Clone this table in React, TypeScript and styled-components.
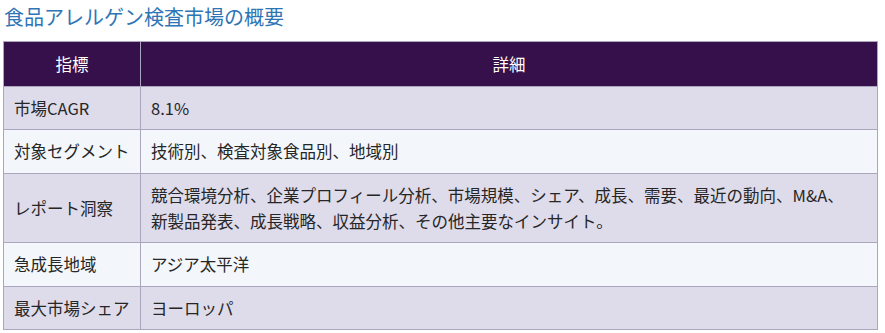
import React from "react";
import styled, { createGlobalStyle } from "styled-components";

const Global = createGlobalStyle`
  html, body { margin: 0; padding: 0; background: #ffffff; }
  body { font-family: "Noto Sans CJK JP", "Noto Sans", sans-serif; }
`;

const Page = styled.div`
  padding: 0 7px 0 3px;
`;

const Title = styled.h2`
  margin: 0;
  padding: 3px 0 0 1px;
  height: 41px;
  box-sizing: border-box;
  font-size: 20px;
  line-height: 28px;
  font-weight: 400;
  color: #2e75b6;
`;

const Table = styled.table`
  width: 100%;
  border-collapse: collapse;
  font-size: 16.5px;
  color: #262626;
  border: 1px solid #aaa6bd;
`;

const HeadCell = styled.th<{ $w?: string }>`
  background: #35104a;
  color: #ffffff;
  font-weight: 400;
  text-align: center;
  padding: 9px 10px;
  line-height: 26px;
  border: 1px solid #aaa6bd;
  width: ${(p) => p.$w ?? "auto"};
`;

const Row = styled.tr<{ $alt: boolean }>`
  background: ${(p) => (p.$alt ? "#f3f7fc" : "#dedbea")};
`;

const Cell = styled.td`
  padding: 8px 10px 8.4px 10px;
  line-height: 26px;
  border: 1px solid #aaa6bd;
  vertical-align: middle;
  white-space: nowrap;
`;

const rows: [string, React.ReactNode][] = [
  ["市場CAGR", "8.1%"],
  ["対象セグメント", "技術別、検査対象食品別、地域別"],
  [
    "レポート洞察",
    <>
      競合環境分析、企業プロフィール分析、市場規模、シェア、成長、需要、最近の動向、M&amp;A、
      <br />
      新製品発表、成長戦略、収益分析、その他主要なインサイト。
    </>,
  ],
  ["急成長地域", "アジア太平洋"],
  ["最大市場シェア", "ヨーロッパ"],
];

export default function App() {
  return (
    <Page>
      <Global />
      <Title>食品アレルゲン検査市場の概要</Title>
      <Table>
        <thead>
          <tr>
            <HeadCell $w="116px">指標</HeadCell>
            <HeadCell>詳細</HeadCell>
          </tr>
        </thead>
        <tbody>
          {rows.map(([k, v], i) => (
            <Row key={k} $alt={i % 2 === 1}>
              <Cell>{k}</Cell>
              <Cell>{v}</Cell>
            </Row>
          ))}
        </tbody>
      </Table>
    </Page>
  );
}
